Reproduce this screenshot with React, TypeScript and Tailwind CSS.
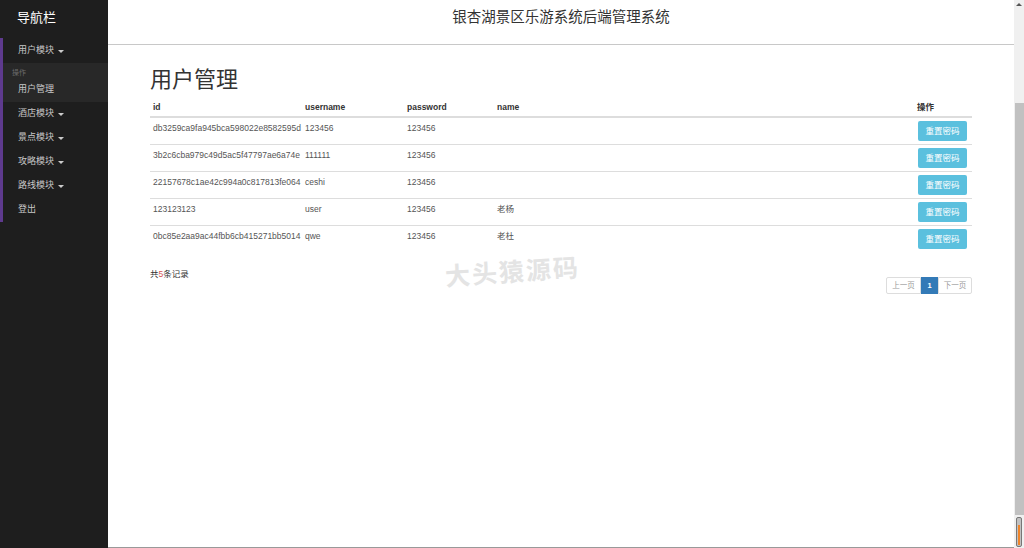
import React from 'react';

const font = { fontFamily: '"Liberation Sans", "Noto Sans CJK SC", sans-serif' };

const rows = [
  { id: 'db3259ca9fa945bca598022e8582595d', username: '123456', password: '123456', name: '' },
  { id: '3b2c6cba979c49d5ac5f47797ae6a74e', username: '111111', password: '123456', name: '' },
  { id: '22157678c1ae42c994a0c817813fe064', username: 'ceshi', password: '123456', name: '' },
  { id: '123123123', username: 'user', password: '123456', name: '老杨' },
  { id: '0bc85e2aa9ac44fbb6cb415271bb5014', username: 'qwe', password: '123456', name: '老杜' },
];

const Caret = () => (
  <span className="ml-[4px] inline-block h-0 w-0 border-x-[3px] border-t-[3px] border-x-transparent border-t-[#ccc] align-middle" />
);

const MenuItem: React.FC<{ label: string; caret?: boolean }> = ({ label, caret }) => (
  <div className="flex h-[24px] items-center pl-[15px] text-[9px] text-[#c8c8c8]">
    {label}
    {caret && <Caret />}
  </div>
);

const Sidebar = () => (
  <aside className="flex h-full w-[108px] shrink-0 flex-col bg-[#1e1e1e]">
    <div className="h-[38px] pl-[17px] pt-[9px] text-[13px] leading-[17px] text-white">导航栏</div>
    <div className="border-l-[3px] border-[#5e3a8e] pt-[1px]">
      <MenuItem label="用户模块" caret />
      <div className="bg-[#282828]">
        <div className="flex h-[15px] items-end pl-[9px] text-[7px] text-[#6d6d6d]">操作</div>
        <MenuItem label="用户管理" />
      </div>
      <MenuItem label="酒店模块" caret />
      <MenuItem label="景点模块" caret />
      <MenuItem label="攻略模块" caret />
      <MenuItem label="路线模块" caret />
      <MenuItem label="登出" />
    </div>
  </aside>
);

const cols = 'grid grid-cols-[152px_102px_90px_1fr_58px]';

const Scrollbar = () => (
  <div className="flex h-full w-[10px] shrink-0 flex-col items-center bg-[#f0f0f0]">
    <div className="mt-[3px] h-0 w-0 border-x-[3px] border-b-[3px] border-x-transparent border-b-[#555]" />
    <div className="mt-[97px] h-[412px] w-[9px] bg-[#c1c1c1]" />
    <div className="mt-[2px] flex h-[30px] w-[6px] flex-col justify-end rounded-[2px] border border-[#777] bg-[#c1c1c1] p-[1px]">
      <div className="h-[20px] w-full bg-[#f0852a]" />
    </div>
  </div>
);

export default function App() {
  return (
    <div className="flex h-[548px] w-[1024px] overflow-hidden bg-white" style={font}>
      <Sidebar />
      <main className="relative flex h-full flex-1 flex-col border-b border-[#999]">
        <header className="h-[45px] border-b border-[#c8c8c8] pt-[8px] text-center text-[14.5px] leading-[18px] text-[#333]">
          银杏湖景区乐游系统后端管理系统
        </header>
        <div className="px-[42px] pt-[22px]">
          <h1 className="h-[28px] text-[22px] leading-[26px] text-[#333]">用户管理</h1>
          <div className={`${cols} h-[23px] border-b-2 border-[#ddd] pt-[5px] text-[8.5px] font-bold leading-[14px] text-[#333]`}>
            <div className="pl-[3px]">id</div>
            <div className="pl-[3px]">username</div>
            <div className="pl-[3px]">password</div>
            <div className="pl-[3px]">name</div>
            <div className="pl-[3px]">操作</div>
          </div>
          {rows.map((r, i) => (
            <div
              key={r.id}
              className={`${cols} text-[8.5px] leading-[14px] text-[#555] ${i === 0 ? 'h-[26px]' : 'h-[27px] border-t border-[#ddd]'}`}
            >
              <div className="pl-[3px] pt-[3px]">{r.id}</div>
              <div className="pl-[3px] pt-[3px]">{r.username}</div>
              <div className="pl-[3px] pt-[3px]">{r.password}</div>
              <div className="pl-[3px] pt-[3px]">{r.name}</div>
              <div className="pl-[4px] pt-[3px]">
                <button className="h-[20px] w-[49px] rounded-[2px] bg-[#5bc0de] text-[8.5px] text-white">重置密码</button>
              </div>
            </div>
          ))}
          <div className="mt-[15px] flex items-start justify-between">
            <div className="text-[8.5px] leading-[14px] text-[#333]">
              共<span className="text-[#d9534f]">5</span>条记录
            </div>
            <div className="mt-[10px] flex h-[17px] text-[7.5px] leading-[15px]">
              <div className="w-[35px] rounded-l-[2px] border border-[#ddd] text-center text-[#999]">上一页</div>
              <div className="w-[17px] border border-[#337ab7] bg-[#337ab7] text-center font-bold text-white">1</div>
              <div className="w-[34px] rounded-r-[2px] border border-[#ddd] text-center text-[#999]">下一页</div>
            </div>
          </div>
        </div>
        <div className="pointer-events-none absolute left-[337px] top-[254px] -rotate-[4deg] text-[25px] font-bold tracking-[2px] text-[#e4e4e4]">
          大头猿源码
        </div>
      </main>
      <Scrollbar />
    </div>
  );
}
